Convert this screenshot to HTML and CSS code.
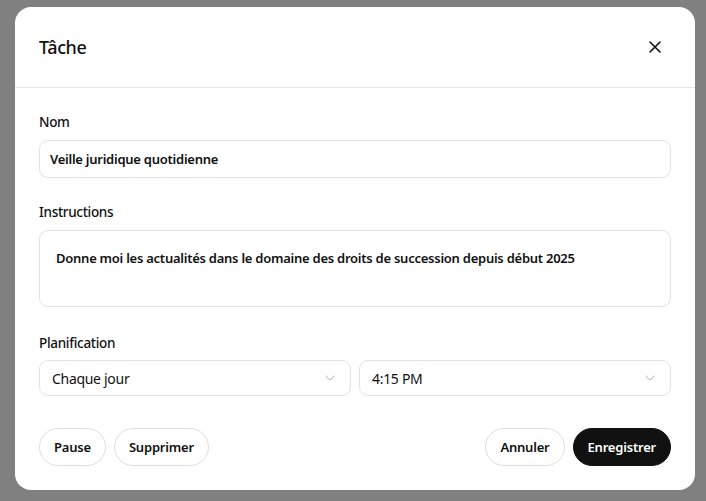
FILE: index.html
```html
<!DOCTYPE html>
<html lang="fr">
<head>
<meta charset="utf-8">
<link rel="stylesheet" href="styles.css">
</head>
<body>
<div class="dialog">
  <div class="header">
    <h2 class="title">Tâche</h2>
    <button class="close" aria-label="Fermer">
      <svg width="12" height="12" viewBox="0 0 12 12"><path d="M1 1L11 11M11 1L1 11" stroke="#111" stroke-width="1.6" stroke-linecap="round"/></svg>
    </button>
  </div>
  <div class="body">
    <div class="field">
      <label class="label">Nom</label>
      <div class="input">Veille juridique quotidienne</div>
    </div>
    <div class="field">
      <label class="label">Instructions</label>
      <div class="textarea">Donne moi les actualités dans le domaine des droits de succession depuis début 2025</div>
    </div>
    <div class="field plan">
      <label class="label">Planification</label>
      <div class="selects">
        <div class="select"><span>Chaque jour</span><svg width="10" height="6" viewBox="0 0 10 6"><path d="M0.5 0.8L5 5.2L9.5 0.8" fill="none" stroke="#a8a8a8" stroke-width="1"/></svg></div>
        <div class="select"><span>4:15 PM</span><svg width="10" height="6" viewBox="0 0 10 6"><path d="M0.5 0.8L5 5.2L9.5 0.8" fill="none" stroke="#a8a8a8" stroke-width="1"/></svg></div>
      </div>
    </div>
    <div class="footer">
      <div class="group">
        <button class="btn">Pause</button>
        <button class="btn">Supprimer</button>
      </div>
      <div class="group">
        <button class="btn">Annuler</button>
        <button class="btn primary">Enregistrer</button>
      </div>
    </div>
  </div>
</div>
</body>
</html>
```
FILE: styles.css
```css
* { box-sizing: border-box; }
html, body { margin: 0; padding: 0; }
body {
  background: #808080;
  font-family: "Noto Sans", "Open Sans", sans-serif;
  color: #111;
  width: 706px;
  height: 501px;
  overflow: hidden;
}
.dialog {
  margin: 7px 0 0 15px;
  width: 680px;
  height: 483px;
  background: #fff;
  border-radius: 16px;
  overflow: hidden;
}
.header {
  height: 81px;
  border-bottom: 1px solid #e6e6e6;
  display: flex;
  align-items: center;
  justify-content: space-between;
  padding: 0 24px;
}
.title {
  margin: 0;
  font-size: 18px;
  font-weight: 500;
  letter-spacing: -0.4px;
}
.close {
  border: none;
  background: none;
  padding: 0;
  width: 24px;
  height: 24px;
  display: flex;
  align-items: center;
  justify-content: center;
  margin-right: 4px;
  margin-top: -1px;
}
.body {
  padding: 24px 24px 0;
}
.field { margin-bottom: 24px; }
.field.plan { margin-bottom: 32px; }
.field:nth-child(2) { margin-bottom: 26px; }
.label {
  display: block;
  font-size: 13.5px;
  font-weight: 500;
  line-height: 20px;
  margin-bottom: 8px;
  letter-spacing: -0.3px;
}
.field.plan .label { margin-bottom: 7px; }
.input {
  height: 38px;
  border: 1px solid #e2e2e2;
  border-radius: 9px;
  display: flex;
  align-items: center;
  padding: 0 10px;
  font-size: 13px;
  font-weight: 600;
  letter-spacing: -0.25px;
}
.textarea {
  height: 77px;
  border: 1px solid #e2e2e2;
  border-radius: 9px;
  padding: 17px 16px;
  font-size: 13px;
  font-weight: 600;
  line-height: 20px;
  letter-spacing: -0.25px;
}
.selects {
  display: grid;
  grid-template-columns: 1fr 1fr;
  gap: 8px;
}
.select {
  height: 36px;
  border: 1px solid #e2e2e2;
  border-radius: 9px;
  display: flex;
  align-items: center;
  justify-content: space-between;
  padding: 0 15px 0 12px;
  font-size: 14px;
  letter-spacing: -0.3px;
}
.footer {
  display: flex;
  justify-content: space-between;
}
.group { display: flex; gap: 8px; }
.btn {
  height: 38px;
  border: 1px solid #dedede;
  border-radius: 19px;
  background: #fff;
  padding: 0 14px;
  font-family: inherit;
  font-size: 13px;
  font-weight: 600;
  letter-spacing: -0.2px;
  color: #111;
}
.btn.primary {
  background: #111;
  border-color: #111;
  color: #fff;
}
```
